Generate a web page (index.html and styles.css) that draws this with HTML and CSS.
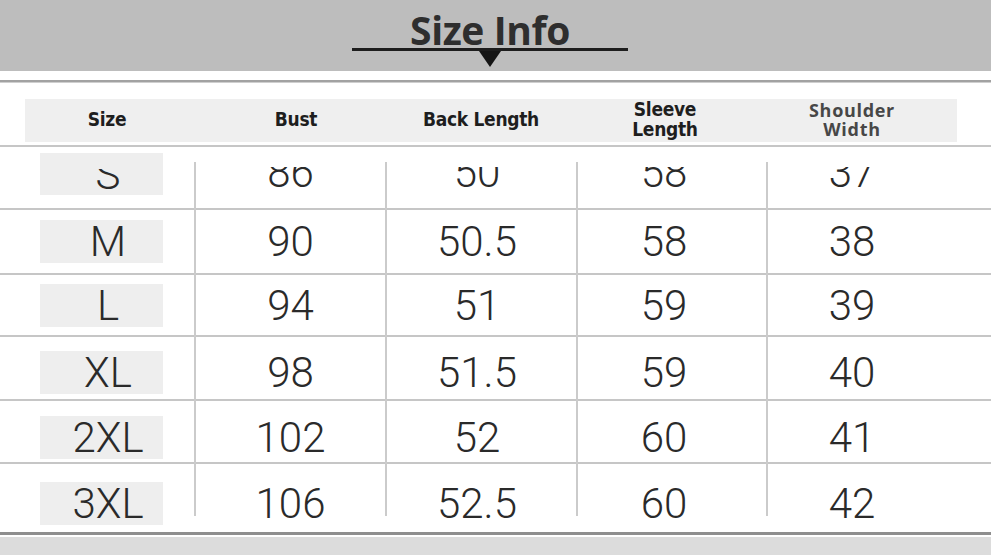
FILE: index.html
```html
<!DOCTYPE html>
<html lang="en">
<head>
<meta charset="utf-8">
<title>Size Info</title>
<link rel="stylesheet" href="styles.css">
</head>
<body>
<div class="page">
  <header class="banner">
    <div class="title-wrap">
      <h1 class="title">Size Info</h1>
      <div class="rule"></div>
      <div class="pointer"></div>
    </div>
  </header>
  <div class="topline"></div>
  <div class="head-area">
    <div class="thead">
      <div class="th">Size</div>
      <div class="th">Bust</div>
      <div class="th">Back Length</div>
      <div class="th">Sleeve<br>Length</div>
      <div class="th alt">Shoulder<br>Width</div>
    </div>
  </div>
  <div class="tbody">
    <div class="row r1">
      <div class="cell size"><span class="chip"><span class="txt">S</span></span></div>
      <div class="cell c2"><span class="txt">86</span></div>
      <div class="cell c3"><span class="txt">50</span></div>
      <div class="cell c4"><span class="txt">58</span></div>
      <div class="cell c5"><span class="txt">37</span></div>
    </div>
    <div class="row r2">
      <div class="cell size"><span class="chip"><span class="txt">M</span></span></div>
      <div class="cell c2"><span class="txt">90</span></div>
      <div class="cell c3"><span class="txt">50.5</span></div>
      <div class="cell c4"><span class="txt">58</span></div>
      <div class="cell c5"><span class="txt">38</span></div>
    </div>
    <div class="row r3">
      <div class="cell size"><span class="chip"><span class="txt">L</span></span></div>
      <div class="cell c2"><span class="txt">94</span></div>
      <div class="cell c3"><span class="txt">51</span></div>
      <div class="cell c4"><span class="txt">59</span></div>
      <div class="cell c5"><span class="txt">39</span></div>
    </div>
    <div class="row r4">
      <div class="cell size"><span class="chip"><span class="txt">XL</span></span></div>
      <div class="cell c2"><span class="txt">98</span></div>
      <div class="cell c3"><span class="txt">51.5</span></div>
      <div class="cell c4"><span class="txt">59</span></div>
      <div class="cell c5"><span class="txt">40</span></div>
    </div>
    <div class="row r5">
      <div class="cell size"><span class="chip"><span class="txt">2XL</span></span></div>
      <div class="cell c2"><span class="txt">102</span></div>
      <div class="cell c3"><span class="txt">52</span></div>
      <div class="cell c4"><span class="txt">60</span></div>
      <div class="cell c5"><span class="txt">41</span></div>
    </div>
    <div class="row r6">
      <div class="cell size"><span class="chip"><span class="txt">3XL</span></span></div>
      <div class="cell c2"><span class="txt">106</span></div>
      <div class="cell c3"><span class="txt">52.5</span></div>
      <div class="cell c4"><span class="txt">60</span></div>
      <div class="cell c5"><span class="txt">42</span></div>
    </div>
    <div class="vrules"><i></i><i></i><i></i><i></i><i></i></div>
  </div>
  <footer class="footer"><div class="footer-band"></div></footer>
</div>
</body>
</html>
```
FILE: styles.css
```css
* { box-sizing: border-box; }
html, body { margin: 0; padding: 0; background: #fff; }
.page {
  width: 991px;
  height: 555px;
  overflow: hidden;
  background: #fff;
  font-family: "Liberation Sans", Arial, sans-serif;
}

/* banner */
.banner {
  height: 71px;
  background: #bdbdbd;
  display: flex;
  justify-content: center;
  padding-right: 11px;
}
.title-wrap {
  display: flex;
  flex-direction: column;
  align-items: center;
  width: 276px;
}
.title {
  margin: 0;
  padding-top: 10px;
  font-family: "Open Sans", sans-serif;
  font-weight: 700;
  font-size: 39px;
  line-height: 39px;
  color: #2e2e2e;
  letter-spacing: -0.4px;
}
.rule {
  width: 276px;
  height: 3px;
  margin-top: -1px;
  background: #1d1d1d;
}
.pointer {
  width: 0;
  height: 0;
  border-left: 11px solid transparent;
  border-right: 11px solid transparent;
  border-top: 16px solid #151515;
}

.topline {
  margin-top: 9px;
  height: 3px;
  background: #a2a2a2;
  border-bottom: 1px solid #cfcfcf;
}

/* header */
.head-area {
  padding-top: 16px;
  padding-bottom: 3px;
  border-bottom: 2px solid #c6c6c6;
}
.thead {
  margin-left: 25px;
  width: 932px;
  height: 43px;
  background: #efefef;
  display: grid;
  grid-template-columns: 164px 214px 156px 212px 162px;
}
.th {
  display: flex;
  align-items: center;
  justify-content: center;
  text-align: center;
  padding-bottom: 11px;
  font-family: "DejaVu Sans", sans-serif;
  font-stretch: condensed;
  font-weight: 700;
  font-size: 19px;
  line-height: 20px;
  color: #1e1e1e;
  letter-spacing: -0.3px;
}
.th.alt {
  font-family: "Open Sans", sans-serif;
  font-stretch: normal;
  font-size: 18px;
  line-height: 19px;
  color: #474747;
  letter-spacing: 0.7px;
  padding-bottom: 10px;
}

/* body rows */
.tbody {
  position: relative;
}
.row {
  display: grid;
  grid-template-columns: 195px 191px 191px 190px 170px;
  align-items: start;
  border-bottom: 2px solid #c6c6c6;
}
.r1 { height: 63px; padding-top: 4px; }
.r2 { height: 65px; padding-top: 10px; }
.r3 { height: 62px; padding-top: 9px; }
.r4 { height: 64px; padding-top: 14px; }
.r5 { height: 63px; padding-top: 15px; }
.r6 { height: 68px; padding-top: 18px; border-bottom: none; }

.cell {
  text-align: center;
  font-family: Roboto, "Liberation Sans", Arial, sans-serif;
  font-weight: 300;
  font-size: 42px;
  line-height: 43px;
  color: #2a2a2a;
}
.txt { display: block; }
.r1 .txt { clip-path: inset(16px 0 0 0); }
.chip {
  display: block;
  margin-left: 40px;
  width: 123px;
  height: 43px;
  padding-left: 13px;
  background: #eeeeee;
}
.r1 .chip { margin-top: 2px; height: 42px; }
.c3 { padding-right: 9px; }
.c4 { padding-right: 16px; }

.vrules {
  position: absolute;
  top: 15px;
  left: 0;
  right: 0;
  height: 354px;
  display: grid;
  grid-template-columns: 194px 191px 191px 190px 1fr;
  pointer-events: none;
}
.vrules i + i { border-left: 2px solid #cbcbcb; }

/* footer */
.footer {
  border-top: 3px solid #8e8e8e;
  padding-top: 2px;
}
.footer-band {
  height: 20px;
  background: #dcdcdc;
}
```
